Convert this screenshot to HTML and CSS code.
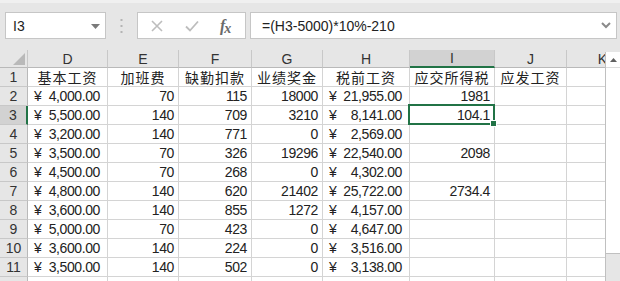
FILE: index.html
```html
<!DOCTYPE html>
<html lang="zh-CN">
<head>
    <meta charset="UTF-8">
    <title>工资表</title>
    <link rel="stylesheet" href="styles.css">
</head>
<body>
    <div class="toolbar">
        <div class="namebox">
            <span>I3</span>
            <svg class="drop" width="9" height="5" viewBox="0 0 9 5"><path d="M0 0 H9 L4.5 5 Z" fill="#7a7a7a"/></svg>
        </div>
        <div class="grip">
            <svg width="3" height="14" viewBox="0 0 3 14"><rect x="0.5" y="0" width="2" height="2" fill="#b4b4b4"/><rect x="0.5" y="6" width="2" height="2" fill="#b4b4b4"/><rect x="0.5" y="12" width="2" height="2" fill="#b4b4b4"/></svg>
        </div>
        <div class="fxbtns">
            <svg class="cancel" width="12" height="12" viewBox="0 0 12 12"><path d="M1 1 L11 11 M11 1 L1 11" stroke="#bdbdbd" stroke-width="1.6"/></svg>
            <svg class="enter" width="14" height="12" viewBox="0 0 14 12"><path d="M1 6.5 L5 10.5 L13 1.5" stroke="#bdbdbd" stroke-width="1.8" fill="none"/></svg>
            <span class="fx">f<span class="x">x</span></span>
        </div>
        <div class="formula">
            <span>=(H3-5000)*10%-210</span>
            <svg width="10" height="7" viewBox="0 0 10 7"><path d="M1 1 L5 5 L9 1" stroke="#8a8a8a" stroke-width="2" fill="none"/></svg>
        </div>
    </div>

    <div class="sheet">
        <div class="grid">
            <div class="corner"><svg width="12" height="12" viewBox="0 0 12 12"><path d="M12 0 V12 H0 Z" fill="#b9b9b9"/></svg></div>
            <div class="hd">D</div><div class="hd">E</div><div class="hd">F</div><div class="hd">G</div><div class="hd">H</div><div class="hd sel">I</div><div class="hd">J</div><div class="hd">K</div>

            <div class="rh">1</div>
            <div class="c txt">基本工资</div><div class="c txt">加班费</div><div class="c txt">缺勤扣款</div><div class="c txt">业绩奖金</div><div class="c txt">税前工资</div><div class="c txt">应交所得税</div><div class="c txt">应发工资</div><div class="c"></div>

            <div class="rh">2</div>
            <div class="c acc"><span>¥</span><span>4,000.00</span></div><div class="c num">70</div><div class="c num">115</div><div class="c num">18000</div><div class="c acc"><span>¥</span><span>21,955.00</span></div><div class="c num">1981</div><div class="c"></div><div class="c"></div>

            <div class="rh sel">3</div>
            <div class="c acc"><span>¥</span><span>5,500.00</span></div><div class="c num">140</div><div class="c num">709</div><div class="c num">3210</div><div class="c acc"><span>¥</span><span>8,141.00</span></div><div class="c num active">104.1</div><div class="c"></div><div class="c"></div>

            <div class="rh">4</div>
            <div class="c acc"><span>¥</span><span>3,200.00</span></div><div class="c num">140</div><div class="c num">771</div><div class="c num">0</div><div class="c acc"><span>¥</span><span>2,569.00</span></div><div class="c"></div><div class="c"></div><div class="c"></div>

            <div class="rh">5</div>
            <div class="c acc"><span>¥</span><span>3,500.00</span></div><div class="c num">70</div><div class="c num">326</div><div class="c num">19296</div><div class="c acc"><span>¥</span><span>22,540.00</span></div><div class="c num">2098</div><div class="c"></div><div class="c"></div>

            <div class="rh">6</div>
            <div class="c acc"><span>¥</span><span>4,500.00</span></div><div class="c num">70</div><div class="c num">268</div><div class="c num">0</div><div class="c acc"><span>¥</span><span>4,302.00</span></div><div class="c"></div><div class="c"></div><div class="c"></div>

            <div class="rh">7</div>
            <div class="c acc"><span>¥</span><span>4,800.00</span></div><div class="c num">140</div><div class="c num">620</div><div class="c num">21402</div><div class="c acc"><span>¥</span><span>25,722.00</span></div><div class="c num">2734.4</div><div class="c"></div><div class="c"></div>

            <div class="rh">8</div>
            <div class="c acc"><span>¥</span><span>3,600.00</span></div><div class="c num">140</div><div class="c num">855</div><div class="c num">1272</div><div class="c acc"><span>¥</span><span>4,157.00</span></div><div class="c"></div><div class="c"></div><div class="c"></div>

            <div class="rh">9</div>
            <div class="c acc"><span>¥</span><span>5,000.00</span></div><div class="c num">70</div><div class="c num">423</div><div class="c num">0</div><div class="c acc"><span>¥</span><span>4,647.00</span></div><div class="c"></div><div class="c"></div><div class="c"></div>

            <div class="rh">10</div>
            <div class="c acc"><span>¥</span><span>3,600.00</span></div><div class="c num">140</div><div class="c num">224</div><div class="c num">0</div><div class="c acc"><span>¥</span><span>3,516.00</span></div><div class="c"></div><div class="c"></div><div class="c"></div>

            <div class="rh">11</div>
            <div class="c acc"><span>¥</span><span>3,500.00</span></div><div class="c num">140</div><div class="c num">502</div><div class="c num">0</div><div class="c acc"><span>¥</span><span>3,138.00</span></div><div class="c"></div><div class="c"></div><div class="c"></div>

            <div class="rh"></div>
            <div class="c"></div><div class="c"></div><div class="c"></div><div class="c"></div><div class="c"></div><div class="c"></div><div class="c"></div><div class="c"></div>
        </div>

        <div class="vscroll">
            <div class="arrow"><svg width="7" height="4" viewBox="0 0 7 4"><path d="M0 4 L3.5 0 L7 4 Z" fill="#606060"/></svg></div>
            <div class="thumb"></div>
            <div class="track"></div>
        </div>
    </div>
</body>
</html>
```

FILE: styles.css
```css
body {
    margin: 0;
    width: 620px;
    height: 281px;
    overflow: hidden;
    background-color: #e6e6e6;
    font-family: 'Liberation Sans', Arial, 'Noto Sans CJK SC', sans-serif;
    color: #222;
}
.toolbar {
    height: 50px;
    box-sizing: border-box;
    display: flex;
    align-items: flex-start;
    border-top: 3px solid #f0f0f0;
    padding-top: 9px;
}
.namebox {
    margin-left: 5px;
    width: 101px;
    height: 27px;
    box-sizing: border-box;
    background-color: #fff;
    border: 1px solid #c6c6c6;
    display: flex;
    align-items: center;
    justify-content: space-between;
    padding: 0 5px 0 7px;
    font-size: 14px;
}
.drop {
    margin-top: 1px;
}
.grip {
    width: 31px;
    height: 27px;
    display: flex;
    align-items: center;
    justify-content: center;
}
.fxbtns {
    width: 109px;
    height: 27px;
    box-sizing: border-box;
    background-color: #fff;
    border: 1px solid #c6c6c6;
    display: flex;
    align-items: center;
    padding-left: 13px;
}
.enter {
    margin-left: 22px;
}
.fx {
    font-family: 'Liberation Serif', serif;
    font-style: italic;
    font-weight: bold;
    font-size: 16px;
    color: #6a6a6a;
    margin-left: 21px;
}
.fx .x {
    font-size: 14px;
    position: relative;
    top: 2px;
    margin-left: -1px;
}
.formula {
    margin-left: 4px;
    width: 367px;
    height: 27px;
    box-sizing: border-box;
    background-color: #fff;
    border: 1px solid #c6c6c6;
    display: flex;
    align-items: center;
    justify-content: space-between;
    padding: 0 5px 0 11px;
    font-size: 14px;
}
.sheet {
    display: flex;
    align-items: flex-start;
}
.grid {
    width: 605px;
    flex-shrink: 0;
    display: grid;
    grid-template-columns: 28px 80px 71px 73px 71px 87px 85px 72px 72px;
    grid-template-rows: 18px repeat(12, 19px);
    background-color: #fff;
    overflow: hidden;
}
.corner {
    background-color: #e6e6e6;
    border-right: 1px solid #c8c8c8;
    border-bottom: 1px solid #b9b9b9;
    display: flex;
    align-items: flex-end;
    justify-content: flex-end;
    padding: 0 2px 2px 0;
}
.hd {
    background-color: #e6e6e6;
    border-right: 1px solid #c8c8c8;
    border-bottom: 1px solid #b9b9b9;
    text-align: center;
    font-size: 14px;
    line-height: 18px;
    color: #333;
}
.hd.sel {
    background-color: #d2d2d2;
    border-bottom: 2px solid #217346;
    line-height: 17px;
}
.rh {
    background-color: #e6e6e6;
    border-right: 1px solid #b9b9b9;
    border-bottom: 1px solid #c8c8c8;
    text-align: center;
    font-size: 14px;
    line-height: 19px;
    color: #333;
}
.rh.sel {
    background-color: #d2d2d2;
    border-right: 2px solid #217346;
}
.c {
    border-right: 1px solid #d4d4d4;
    border-bottom: 1px solid #d4d4d4;
    font-size: 14px;
    line-height: 19px;
    letter-spacing: -0.4px;
    white-space: nowrap;
    overflow: hidden;
}
.txt {
    font-family: 'Noto Sans CJK SC', sans-serif;
    text-align: center;
    letter-spacing: 1px;
    line-height: 18px;
}
.num {
    text-align: right;
    padding-right: 4px;
}
.acc {
    display: flex;
    justify-content: space-between;
    padding: 0 7px 0 6px;
}
.active {
    position: relative;
    overflow: visible;
}
.active::after {
    content: "";
    position: absolute;
    left: -2px;
    top: -2px;
    right: -1px;
    bottom: -1px;
    border: 2px solid #217346;
}
.active::before {
    content: "";
    position: absolute;
    right: -3px;
    bottom: -3px;
    width: 5px;
    height: 5px;
    background-color: #217346;
    border: 1px solid #fff;
    z-index: 1;
}
.vscroll {
    width: 15px;
    flex-shrink: 0;
    margin-top: 2px;
    box-sizing: border-box;
    border-left: 1px solid #c0c0c0;
    display: flex;
    flex-direction: column;
}
.arrow {
    height: 15px;
    background-color: #fff;
    border-bottom: 1px solid #dcdcdc;
    display: flex;
    align-items: center;
    justify-content: center;
}
.thumb {
    height: 185px;
    background-color: #fff;
    border-bottom: 1px solid #c0c0c0;
}
.track {
    height: 40px;
    background-color: #e6e6e6;
}
```
